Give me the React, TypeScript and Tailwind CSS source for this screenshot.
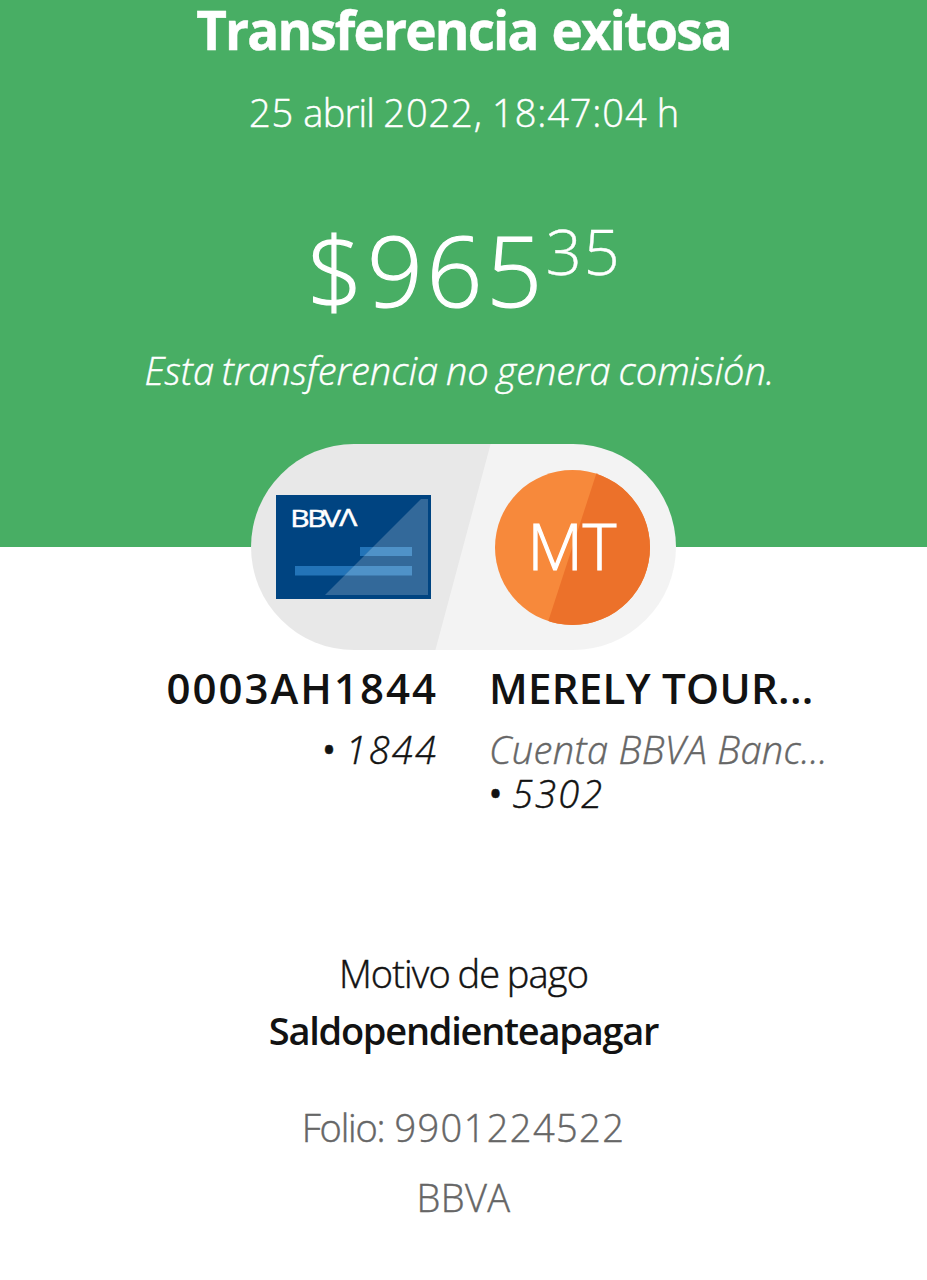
type Party = {
  name: string;
  bank?: string;
  account: string;
};

const origin: Party = { name: "0003AH1844", account: "1844" };
const target: Party = {
  name: "MERELY TOUR...",
  bank: "Cuenta BBVA Banc...",
  account: "5302",
};

function BankCard() {
  return (
    <svg width="155" height="104" viewBox="0 0 155 104">
      <rect width="155" height="104" fill="#004481" />
      <rect x="84" y="52" width="52" height="9" fill="#2374b8" />
      <rect x="19" y="71" width="117" height="9.5" fill="#2374b8" />
      <polygon points="145,4 152,4 152,100 49,100" fill="#33699a" />
      <polygon points="97,52 136,52 136,61 88,61" fill="#4f92c8" />
      <polygon points="78,71 136,71 136,80.5 68.5,80.5" fill="#4f92c8" />
      <text
        transform="scale(1.3 1)"
        x="11 24 36.2 48.6"
        y="32.5"
        dy="0 0 0 -1.5"
        fill="#fff"
        stroke="#fff"
        strokeWidth="0.5"
        fontSize="23"
        fontWeight="400"
        fontFamily="Open Sans, sans-serif"
      >
        BBVΛ
      </text>
    </svg>
  );
}

function Avatar() {
  return (
    <svg width="155" height="155" viewBox="0 0 155 155">
      <defs>
        <clipPath id="avatar">
          <circle cx="77.5" cy="77.5" r="77.5" />
        </clipPath>
      </defs>
      <g clipPath="url(#avatar)">
        <rect width="155" height="155" fill="#f7893b" />
        <polygon points="102.5,0 155,0 155,155 52,155" fill="#ec712a" />
      </g>
      <text
        x="77"
        y="99.5"
        fill="#fff"
        stroke="#fff"
        strokeWidth="1.2"
        fontSize="64"
        fontWeight="300"
        fontFamily="Open Sans, sans-serif"
        textAnchor="middle"
      >
        MT
      </text>
    </svg>
  );
}

function Account({ digits }: { digits: string }) {
  return (
    <p className="flex items-center leading-[44px]">
      <span className="w-[13px] text-center text-[28px] font-bold">•</span>
      <span className="ml-[10px] tracking-[2.2px] italic">{digits}</span>
    </p>
  );
}

export default function App() {
  return (
    <div className="h-[1280px] w-[927px] overflow-hidden bg-white font-['Open_Sans',sans-serif] text-[38px] font-light whitespace-nowrap text-[#121212] [-webkit-text-stroke:0.45px]">
      <header className="flex h-[547px] flex-col items-center bg-[#48ae64] text-white">
        <h1 className="text-[53px] leading-[60px] font-bold tracking-[-1.85px] [word-spacing:2px]">
          Transferencia exitosa
        </h1>
        <p className="mt-[28px] ml-[2px] leading-[48px] tracking-[0.9px] [word-spacing:-1.5px]">
          25 <span className="tracking-[-0.8px]">abril</span> 2022, 18:47:04 h
        </p>
        <div className="mt-[83px] flex items-start pl-0.5 [-webkit-text-stroke:1.2px]">
          <span className="text-[98px] leading-[100px] tracking-[3.7px]">
            $965
          </span>
          <span className="mt-0.5 text-[63px] leading-[60px] tracking-[2px] [-webkit-text-stroke:0.4px]">
            35
          </span>
        </div>
        <p className="mt-[27px] mr-[8px] leading-[48px] italic [word-spacing:-2px]">
          Esta transferencia no genera comisión.
        </p>
      </header>

      {/* origin / target badge */}
      <div className="relative mx-auto -mt-[103px] flex h-[206px] w-[425px] items-center justify-between overflow-hidden rounded-full bg-[linear-gradient(105deg,#e8e8e8_49.8%,#f3f3f3_50%)] pr-[26px] pl-[25px]">
        <BankCard />
        <Avatar />
      </div>

      <section className="mt-[14px] grid grid-cols-[438px_437px] gap-x-[51px]">
        <div className="flex flex-col items-end">
          <h2 className="text-[42px] leading-[48px] font-semibold tracking-[2px] [-webkit-text-stroke:0]">
            {origin.name}
          </h2>
          <div className="mt-[15px]">
            <Account digits={origin.account} />
          </div>
        </div>
        <div>
          <h2 className="text-[42px] leading-[48px] font-semibold tracking-[0.3px] [-webkit-text-stroke:0]">
            {target.name}
          </h2>
          <p className="mt-[15px] leading-[44px] tracking-[0.35px] text-[#666] italic">
            {target.bank}
          </p>
          <Account digits={target.account} />
        </div>
      </section>

      <section className="mt-[134px] flex flex-col items-center leading-[48px]">
        <p className="tracking-[-0.85px] [word-spacing:-1.5px]">
          Motivo de pago
        </p>
        <p className="mt-[9px] font-semibold tracking-[-1.25px] [-webkit-text-stroke:0]">
          Saldopendienteapagar
        </p>
        <p className="mt-[49px] text-[#666]">
          <span className="tracking-[-1.2px]">Folio:</span>
          <span className="ml-[10px] tracking-[1.4px]">9901224522</span>
        </p>
        <p className="mt-[22px] tracking-[0.4px] text-[#666]">BBVA</p>
      </section>
    </div>
  );
}
